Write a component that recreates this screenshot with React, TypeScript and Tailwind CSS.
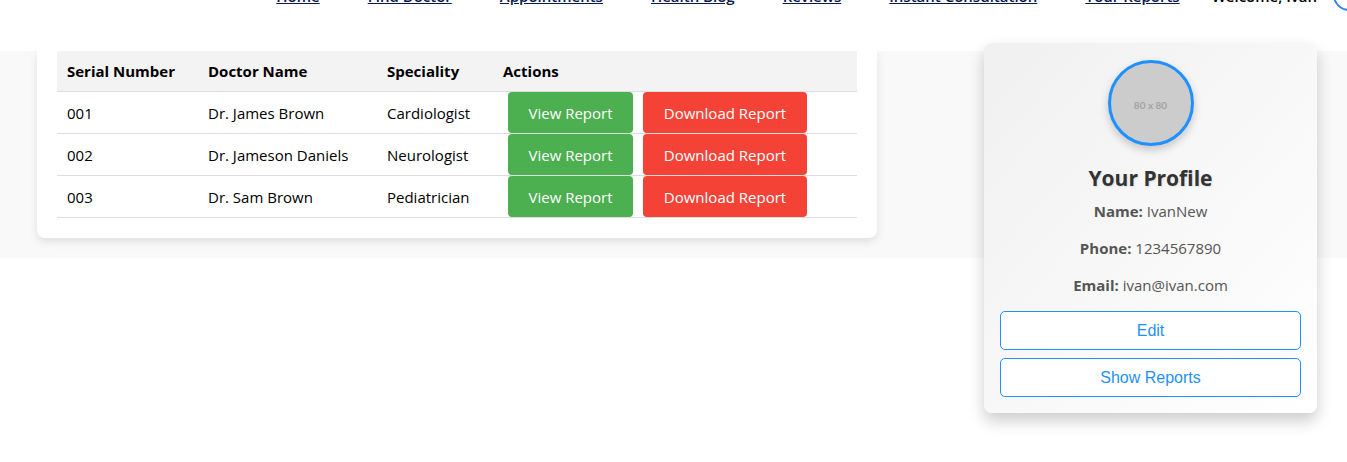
const navLinks = ['Home', 'Find Doctor', 'Appointments', 'Health Blog', 'Reviews', 'Instant Consultation', 'Your Reports'];

const reports = [
  { serial: '001', doctor: 'Dr. James Brown', speciality: 'Cardiologist' },
  { serial: '002', doctor: 'Dr. Jameson Daniels', speciality: 'Neurologist' },
  { serial: '003', doctor: 'Dr. Sam Brown', speciality: 'Pediatrician' },
];

const profile = [
  { label: 'Name', value: 'IvanNew' },
  { label: 'Phone', value: '1234567890' },
  { label: 'Email', value: 'ivan@ivan.com' },
];

function Header() {
  return (
    <header className="flex h-[51px] items-start justify-end overflow-hidden bg-white text-[15px] leading-6 font-semibold">
      <nav className="-mt-4 flex shrink-0 gap-12 whitespace-nowrap">
        {navLinks.map((link) => (
          <a key={link} href="#" className="text-[#0a1a4a] underline">
            {link}
          </a>
        ))}
      </nav>
      <span className="-mt-4 ml-8 shrink-0 whitespace-nowrap text-black">Welcome, Ivan</span>
      <div className="ml-4 w-[14px] shrink-0 overflow-hidden">
        <button
          aria-label="Logout"
          className="-mt-7 block h-[39px] w-24 rounded-2xl border-2 border-[#3685fb] bg-white"
        />
      </div>
    </header>
  );
}

function ReportsTable() {
  return (
    <table className="w-full table-fixed border-separate border-spacing-0 text-left text-[15px] leading-5 text-black">
      <colgroup>
        <col className="w-[141px]" />
        <col className="w-[179px]" />
        <col className="w-[116px]" />
        <col />
      </colgroup>
      <thead>
        <tr className="h-[41px] bg-[#f3f3f3] *:border-b *:border-[#dddddd] *:px-[10px] *:py-0 *:font-bold">
          <th>Serial Number</th>
          <th>Doctor Name</th>
          <th>Speciality</th>
          <th>Actions</th>
        </tr>
      </thead>
      <tbody>
        {reports.map((report) => (
          <tr key={report.serial} className="h-[42px] *:border-b *:border-[#dddddd] *:px-[10px] *:py-0">
            <td>{report.serial}</td>
            <td>{report.doctor}</td>
            <td>{report.speciality}</td>
            <td>
              <div className="flex gap-[10px] px-[5px] whitespace-nowrap text-white">
                <button className="h-[41px] w-[125px] rounded bg-[#4caf50]">View Report</button>
                <button className="h-[41px] w-[164px] rounded bg-[#f44336]">Download Report</button>
              </div>
            </td>
          </tr>
        ))}
      </tbody>
    </table>
  );
}

function ProfileCard() {
  return (
    <aside className="absolute top-[43px] right-[30px] flex w-[333px] flex-col items-center rounded-lg bg-linear-to-br from-[#f0f0f0] to-white p-4 pt-[17px] shadow-[0_8px_16px_rgba(0,0,0,0.2)]">
      <div className="flex size-[86px] items-center justify-center rounded-full border-3 border-[#1e90ff] bg-[#cccccc] pt-1 font-[Lato,sans-serif] text-[10px] font-bold text-[#a3a3a3] shadow-[0_4px_8px_rgba(0,0,0,0.2)]">
        80 x 80
      </div>
      <h2 className="mt-4 text-[21px] leading-8 font-bold text-[#333333] [text-shadow:1px_1px_2px_rgba(0,0,0,0.1)]">
        Your Profile
      </h2>
      <div className="mt-[7px] flex flex-col gap-4 text-center text-[15px] leading-[21px] font-medium text-[#555555]">
        {profile.map((item) => (
          <p key={item.label}>
            <strong className="font-bold">{item.label}:</strong> {item.value}
          </p>
        ))}
      </div>
      <div className="mt-[15px] flex w-full flex-col gap-2 font-['Liberation_Sans',sans-serif] text-base text-[#1e90ff]">
        <button className="h-[39px] rounded-[5px] border border-[#1e90ff] bg-white">Edit</button>
        <button className="h-[39px] rounded-[5px] border border-[#1e90ff] bg-white">Show Reports</button>
      </div>
    </aside>
  );
}

export default function App() {
  return (
    <div className="relative min-h-screen overflow-hidden bg-white font-['Open_Sans','Noto_Sans',sans-serif]">
      <Header />
      <main className="overflow-hidden bg-[#f9f9f9] px-[37px] pb-5">
        <section className="max-w-[840px] rounded-b-lg bg-white px-5 pb-5 shadow-[0_4px_8px_rgba(0,0,0,0.1)]">
          <ReportsTable />
        </section>
      </main>
      <ProfileCard />
    </div>
  );
}
